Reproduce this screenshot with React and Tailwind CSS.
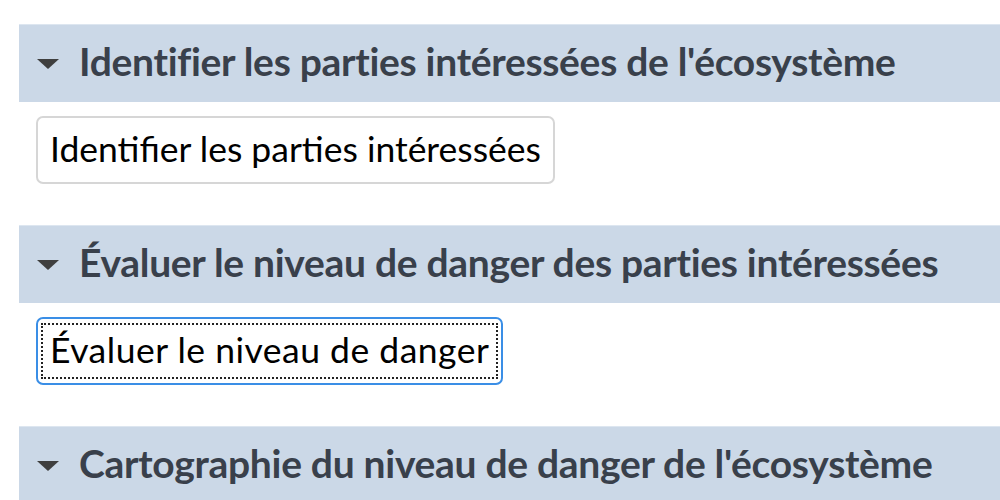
import React from "react";

const SECTIONS = [
  {
    title: "Identifier les parties intéressées de l'écosystème",
    action: "Identifier les parties intéressées",
  },
  {
    title: "Évaluer le niveau de danger des parties intéressées",
    action: "Évaluer le niveau de danger",
    focused: true,
  },
  {
    title: "Cartographie du niveau de danger de l'écosystème",
  },
];

function Twistie() {
  return (
    <svg width="24" height="12" viewBox="0 0 24 12" className="shrink-0">
      <path d="M1 1 L23 1 L12 11 Z" fill="#3f3f3f" />
    </svg>
  );
}

function Section({ title, action, focused }) {
  return (
    <section className="flex flex-col">
      <header className="flex h-[78px] items-center gap-[19px] border-t border-[#dde6f0] bg-[#cbd8e7] pl-[17px]">
        <Twistie />
        <h2 className="whitespace-nowrap pb-[4px] text-[39px] font-bold leading-none tracking-[-0.3px] text-[#39404b]">
          {title}
        </h2>
      </header>
      {action && (
        <div className="pb-[41px] pl-[17px] pt-[14px]">
          <button
            type="button"
            className={`flex h-[68px] items-center rounded-[7px] border-2 bg-white px-[3px] text-[35.5px] leading-none text-black ${
              focused ? "border-[#3a8ee6]" : "border-[#d6d6d6]"
            }`}
          >
            <span
              className={`flex h-[56px] items-center pb-[2px] ${
                focused
                  ? "border-2 border-dotted border-[#222] px-[7px] tracking-[0.5px]"
                  : "px-[9px]"
              }`}
            >
              {action}
            </span>
          </button>
        </div>
      )}
    </section>
  );
}

export default function App() {
  return (
    <div
      className="h-[500px] w-[1000px] overflow-hidden bg-white pl-[19px] pt-[24px]"
      style={{ fontFamily: "Lato, 'Noto Sans', sans-serif" }}
    >
      {SECTIONS.map((s) => (
        <Section key={s.title} {...s} />
      ))}
    </div>
  );
}
